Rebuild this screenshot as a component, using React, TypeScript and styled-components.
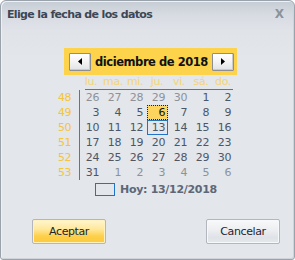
import React from "react";
import styled, { createGlobalStyle } from "styled-components";

const Global = createGlobalStyle`
  html, body { margin: 0; padding: 0; background: #ffffff; }
  body { font-family: "DejaVu Sans", "Noto Sans", sans-serif; }
`;

const Window = styled.div`
  box-sizing: border-box;
  width: 295px;
  height: 260px;
  border: 1px solid #9aa2ac;
  border-radius: 6px 6px 3px 3px;
  background: linear-gradient(to bottom, #c6ccd4 0px, #d7dce2 14px, #e0e4e9 30px, #e3e6ea 60px, #e3e6ea 100%);
  box-shadow: inset 1px 1px 0 #eef0f3, inset -1px -1px 0 #d0d4d9;
  display: flex;
  flex-direction: column;
  overflow: hidden;
`;

const TitleBar = styled.div`
  height: 28px;
  display: flex;
  align-items: center;
  justify-content: space-between;
  padding: 0 10px 0 6px;
`;

const Title = styled.span`
  font-size: 11px;
  font-weight: bold;
  color: #3c4757;
  letter-spacing: -0.65px;
  margin-top: -1px;
`;

const Close = styled.span`
  font-size: 12px;
  font-weight: bold;
  color: #8a929c;
  margin-top: -3px;
`;

const Calendar = styled.div`
  margin: 19px 0 0 57px;
  width: 177px;
  display: flex;
  flex-direction: column;
`;

const Header = styled.div`
  margin-left: 6px;
  width: 173px;
  height: 27px;
  box-sizing: border-box;
  background: #fdd34c;
  display: flex;
  align-items: center;
  justify-content: space-between;
  padding: 0 3px 0 5px;
`;

const NavButton = styled.button`
  width: 22px;
  height: 18px;
  padding: 0;
  box-sizing: border-box;
  border: 1px solid #8c8e92;
  border-radius: 1px;
  background: linear-gradient(to bottom, #ffffff 0%, #f3f3f3 50%, #e2e3e5 100%);
  box-shadow: inset -1px -1px 0 #c9cacc;
  display: flex;
  align-items: center;
  justify-content: center;
  flex: none;
`;

const Month = styled.span`
  font-size: 11.5px;
  font-weight: bold;
  color: #111111;
  letter-spacing: -0.45px;
  white-space: nowrap;
`;

const Grid = styled.div`
  display: grid;
  grid-template-columns: 22px repeat(7, 22px);
`;

const DayNames = styled.div`
  grid-column: 2 / -1;
  height: 15px;
  display: grid;
  grid-template-columns: repeat(7, 22px);
  background: linear-gradient(#6d727a, #6d727a) no-repeat 5px 100% / 148px 1px;
`;

const DayName = styled.span`
  font-size: 11px;
  color: #f4d47a;
  letter-spacing: -0.4px;
  text-align: center;
  line-height: 14px;
`;

const WeekNum = styled.div`
  font-size: 11px;
  color: #f2c53d;
  height: 15px;
  line-height: 13px;
  padding-top: 1px;
  box-sizing: border-box;
  text-align: right;
  padding-right: 12px;
  border-right: 1px solid #6d727a;
  letter-spacing: -0.4px;
`;

const Day = styled.div<{ $muted?: boolean; $selected?: boolean; $today?: boolean }>`
  justify-self: end;
  width: 21px;
  height: 15px;
  box-sizing: border-box;
  font-size: 11px;
  line-height: 13px;
  letter-spacing: -0.4px;
  text-align: right;
  padding-right: 2px;
  color: ${(p) => (p.$muted ? "#8d929a" : p.$selected ? "#111111" : "#4d5667")};
  background: ${(p) => (p.$selected ? "#fdd45e" : "transparent")};
  border: 1px ${(p) => (p.$selected ? "dotted #222" : p.$today ? "solid #1f74c9" : "solid transparent")};
`;

const TodayRow = styled.div`
  display: flex;
  align-items: center;
  gap: 5px;
  margin: 3px 0 0 94px;
`;

const TodayBox = styled.span`
  width: 20px;
  height: 13px;
  box-sizing: border-box;
  border: 1px solid #1f74c9;
`;

const TodayText = styled.span`
  font-size: 11px;
  font-weight: bold;
  color: #5d6778;
  letter-spacing: -0.3px;
`;

const Footer = styled.div`
  display: flex;
  justify-content: space-between;
  margin: 23px 14px 0 31px;
`;

const DlgButton = styled.button<{ $primary?: boolean }>`
  width: 74px;
  height: 25px;
  box-sizing: border-box;
  border: 1px solid #b3b7bd;
  border-radius: 2px;
  font-family: "DejaVu Sans", sans-serif;
  font-size: 11px;
  letter-spacing: -0.4px;
  color: #1c2433;
  padding: 0;
  background: ${(p) =>
    p.$primary
      ? "linear-gradient(to bottom, #fff6d2 0%, #ffe89a 40%, #fdd04a 70%, #fcc93a 100%)"
      : "linear-gradient(to bottom, #f8f9fa 0%, #eceef1 45%, #dfe2e7 75%, #e4e7eb 100%)"};
  box-shadow: inset 0 0 0 1px ${(p) => (p.$primary ? "#fff1c0" : "#f7f8f9")};
`;

const weeks: { n: number; days: { d: number; m?: boolean; s?: boolean; t?: boolean }[] }[] = [
  { n: 48, days: [{ d: 26, m: true }, { d: 27, m: true }, { d: 28, m: true }, { d: 29, m: true }, { d: 30, m: true }, { d: 1 }, { d: 2 }] },
  { n: 49, days: [{ d: 3 }, { d: 4 }, { d: 5 }, { d: 6, s: true }, { d: 7 }, { d: 8 }, { d: 9 }] },
  { n: 50, days: [{ d: 10 }, { d: 11 }, { d: 12 }, { d: 13, t: true }, { d: 14 }, { d: 15 }, { d: 16 }] },
  { n: 51, days: [{ d: 17 }, { d: 18 }, { d: 19 }, { d: 20 }, { d: 21 }, { d: 22 }, { d: 23 }] },
  { n: 52, days: [{ d: 24 }, { d: 25 }, { d: 26 }, { d: 27 }, { d: 28 }, { d: 29 }, { d: 30 }] },
  { n: 53, days: [{ d: 31 }, { d: 1, m: true }, { d: 2, m: true }, { d: 3, m: true }, { d: 4, m: true }, { d: 5, m: true }, { d: 6, m: true }] },
];

const dayNames = ["lu.", "ma.", "mi.", "ju.", "vi.", "sá.", "do."];

const Arrow = ({ dir }: { dir: "left" | "right" }) => (
  <svg width="4" height="7" viewBox="0 0 4 7">
    {dir === "left" ? <polygon points="4,0 4,7 0,3.5" fill="#000" /> : <polygon points="0,0 0,7 4,3.5" fill="#000" />}
  </svg>
);

export default function App() {
  return (
    <>
      <Global />
      <Window>
        <TitleBar>
          <Title>Elige la fecha de los datos</Title>
          <Close>X</Close>
        </TitleBar>
        <Calendar>
          <Header>
            <NavButton>
              <Arrow dir="left" />
            </NavButton>
            <Month>diciembre de 2018</Month>
            <NavButton>
              <Arrow dir="right" />
            </NavButton>
          </Header>
          <Grid>
            <DayNames>
              {dayNames.map((d) => (
                <DayName key={d}>{d}</DayName>
              ))}
            </DayNames>
            {weeks.map((w) => (
              <React.Fragment key={w.n}>
                <WeekNum>{w.n}</WeekNum>
                {w.days.map((d, i) => (
                  <Day key={i} $muted={d.m} $selected={d.s} $today={d.t}>
                    {d.d}
                  </Day>
                ))}
              </React.Fragment>
            ))}
          </Grid>
        </Calendar>
        <TodayRow>
          <TodayBox />
          <TodayText>Hoy: 13/12/2018</TodayText>
        </TodayRow>
        <Footer>
          <DlgButton $primary>Aceptar</DlgButton>
          <DlgButton>Cancelar</DlgButton>
        </Footer>
      </Window>
    </>
  );
}
